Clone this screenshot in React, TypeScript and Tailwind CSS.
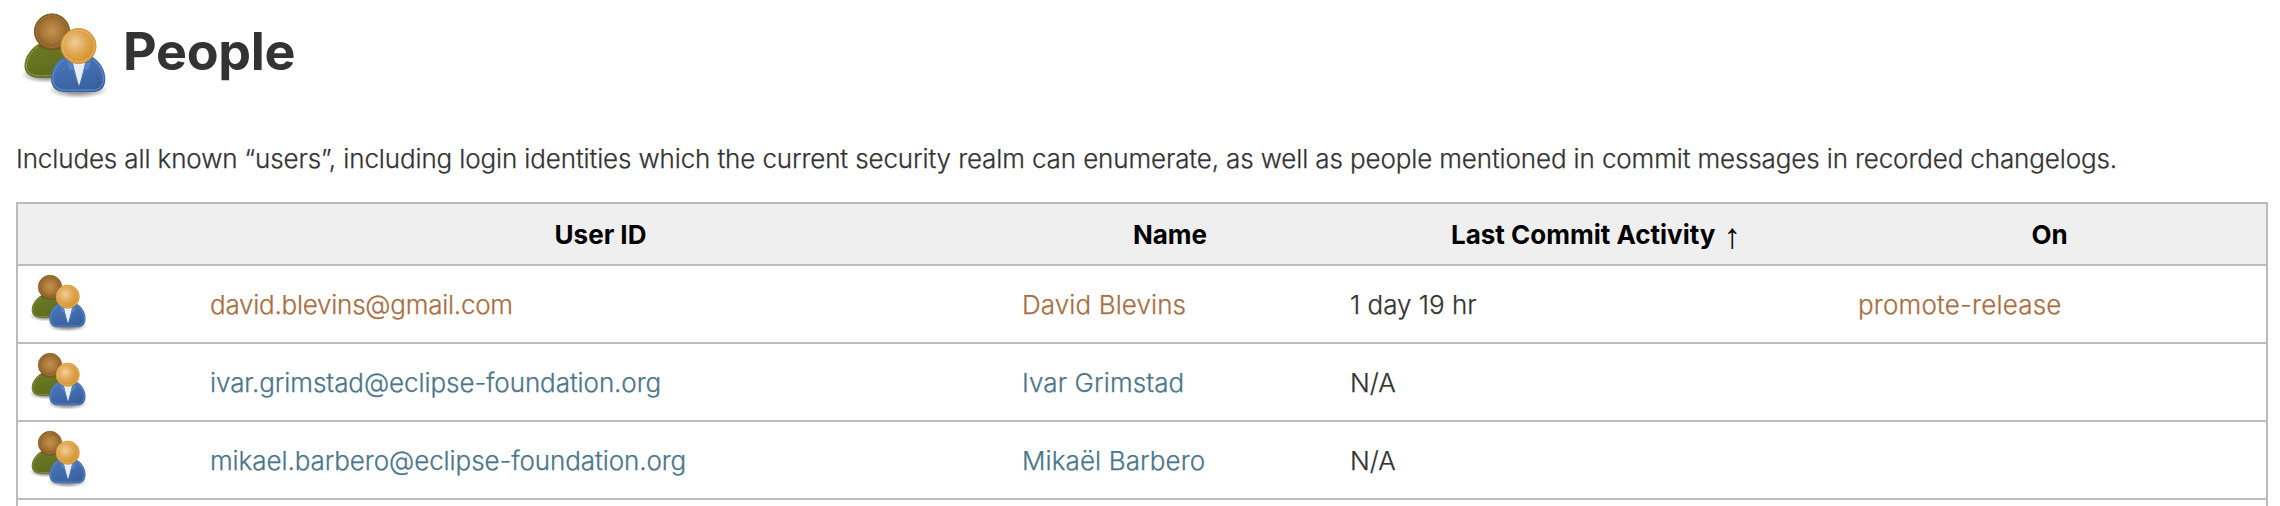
import { clsx } from 'clsx';

interface Person {
  id: string;
  name: string;
  lastActivity: string;
  project?: string;
  visited?: boolean;
}

const people: Person[] = [
  { id: 'david.blevins@gmail.com', name: 'David Blevins', lastActivity: '1 day 19 hr', project: 'promote-release', visited: true },
  { id: 'ivar.grimstad@eclipse-foundation.org', name: 'Ivar Grimstad', lastActivity: 'N/A' },
  { id: 'mikael.barbero@eclipse-foundation.org', name: 'Mikaël Barbero', lastActivity: 'N/A' },
];

const GradientDefs = () => (
  <svg className="h-0 w-0 overflow-hidden" aria-hidden="true">
    <defs>
      <radialGradient id="brown" cx="0.5" cy="0.48" r="0.54">
        <stop offset="0" stopColor="#c4924e" />
        <stop offset="0.6" stopColor="#a47436" />
        <stop offset="1" stopColor="#7c5220" />
      </radialGradient>
      <radialGradient id="blond" cx="0.4" cy="0.4" r="0.6">
        <stop offset="0" stopColor="#efcf9b" />
        <stop offset="0.55" stopColor="#e0a651" />
        <stop offset="1" stopColor="#d4912f" />
      </radialGradient>
      <linearGradient id="green" x1="0" y1="0" x2="0.4" y2="1">
        <stop offset="0" stopColor="#6f7d28" />
        <stop offset="1" stopColor="#5f6c1c" />
      </linearGradient>
      <linearGradient id="blue" x1="0.3" y1="0" x2="0.6" y2="1">
        <stop offset="0" stopColor="#4a77ba" />
        <stop offset="1" stopColor="#38609f" />
      </linearGradient>
      <radialGradient id="shadow">
        <stop offset="0.4" stopColor="#000" stopOpacity="0.4" />
        <stop offset="1" stopColor="#000" stopOpacity="0" />
      </radialGradient>
    </defs>
  </svg>
);

const PeopleIcon = ({ className }: { className?: string }) => (
  <svg viewBox="0 0 96 96" className={clsx('shrink-0', className)}>
    <ellipse cx="30" cy="66" rx="25" ry="8" fill="url(#shadow)" />
    <ellipse cx="62" cy="81" rx="30" ry="8.5" fill="url(#shadow)" />
    <path d="M24 34 C14 40 8.5 48 8.5 57 C8.5 65 15 68.7 22 68.7 H52 V37 Z" fill="url(#green)" />
    <path d="M22 38 C15 42 10.5 50 10.5 57 C10.5 63.5 16 66.7 22 66.7 H36" fill="none" stroke="#8f9b52" strokeWidth="1" />
    <path d="M22 36 C27 43 45 43 50 36 Z" fill="#56541a" opacity="0.6" />
    <circle cx="36" cy="22.5" r="17.6" fill="url(#brown)" stroke="#80581f" strokeWidth="1" />
    <circle cx="36" cy="22.5" r="16" fill="none" stroke="#b68747" strokeWidth="1" opacity="0.6" />
    <path d="M50 47 C41 51 35 60 35 70 C35 79 41 83 48 83 H77 C85 83 89.3 78 89.3 70 C89.3 60 83 51 75 47 Z" fill="url(#blue)" />
    <path d="M48 51 C41 55 37 62 37 70 C37 77 42 81 48 81 H77 C83 81 87.3 77 87.3 70 C87.3 62 83 55 77 51" fill="none" stroke="#6b92cb" strokeWidth="1" />
    <path d="M80 66 L83 72 L80 79" fill="none" stroke="#2f548e" strokeWidth="1" opacity="0.6" />
    <path d="M56.5 54 H69.5 L63 77 Z" fill="#e9edf4" />
    <path d="M51 53 L54 61 L57 60 L62 77 L57 54 Z M75 53 L72 61 L69 60 L64 77 L69 54 Z" fill="#5583c5" />
    <circle cx="62.5" cy="37" r="17.5" fill="url(#blond)" stroke="#d3933a" strokeWidth="1" />
    <circle cx="62.5" cy="37" r="16" fill="none" stroke="#eab868" strokeWidth="1" />
  </svg>
);

const PersonRow = ({ person }: { person: Person }) => {
  const link = person.visited ? 'text-[#a86f43]' : 'text-[#4b758b]';

  return (
    <tr className="h-[78px] border-b-2 border-[#bbb] [-webkit-text-stroke:0.25px]">
      <td className="pl-2">
        <PeopleIcon className="h-16 w-16" />
      </td>
      <td className="pl-4">
        <a href="#" className={clsx(link, person.visited ? 'tracking-[-0.25px]' : 'tracking-[-0.08px]')}>{person.id}</a>
      </td>
      <td className="pl-[15px]">
        <a href="#" className={clsx(link, 'tracking-[0.1px]')}>{person.name}</a>
      </td>
      <td className="pl-[15px]">{person.lastActivity}</td>
      <td className="pl-[15px]">
        {person.project && <a href="#" className={clsx(link, 'tracking-[0.2px]')}>{person.project}</a>}
      </td>
    </tr>
  );
};

const App = () => {
  return (
    <main className="h-[506px] overflow-hidden bg-white px-4 font-['Inter','Liberation_Sans',sans-serif] text-[26px] font-light text-[#333]">
      <header className="flex h-[114px] gap-[11px] pt-[9px]">
        <PeopleIcon className="h-24 w-24" />
        <h1 className="pt-2 text-[52px] leading-[70px] font-bold tracking-[-0.3px]">People</h1>
      </header>

      <p className="h-[88px] pt-[27px] leading-[36px] tracking-[-0.127px] whitespace-nowrap [-webkit-text-stroke:0.25px]">
        Includes all known “users”, including login identities which the current security realm can enumerate, as well as people mentioned in commit messages in recorded changelogs.
      </p>

      <table className="w-[2252px] table-fixed border-collapse border-2 border-[#bbb] whitespace-nowrap">
        <colgroup>
          <col className="w-[177px]" />
          <col className="w-[813px]" />
          <col className="w-[328px]" />
          <col className="w-[508px]" />
          <col />
        </colgroup>
        <thead>
          <tr className="h-[62px] border-b-2 border-[#bbb] bg-[#efefef] font-semibold text-black">
            <th></th>
            <th>User ID</th>
            <th className="pr-0.5">Name</th>
            <th className="pl-3.5">
              Last Commit Activity
              <span className="ml-2 inline-block translate-y-1 font-['Liberation_Serif',serif] text-[35px] leading-[26px] font-normal">↑</span>
            </th>
            <th className="pr-2.5">On</th>
          </tr>
        </thead>
        <tbody>
          {people.map((person) => (
            <PersonRow key={person.id} person={person} />
          ))}
          <tr className="h-[78px]">
            <td colSpan={5}></td>
          </tr>
        </tbody>
      </table>
      <GradientDefs />
    </main>
  );
};

export default App;
